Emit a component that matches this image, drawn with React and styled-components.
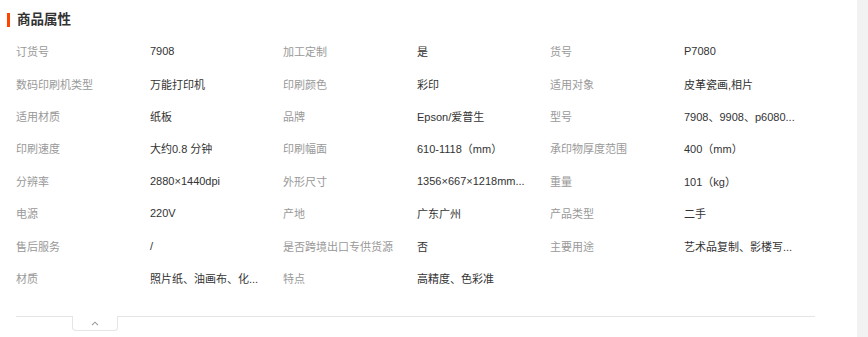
import React from 'react';
import styled, { createGlobalStyle } from 'styled-components';

const GlobalStyle = createGlobalStyle`
  body {
    margin: 0;
    background: #f2f2f2;
    font-family: "Liberation Sans", "Noto Sans CJK SC", sans-serif;
  }
`;

const Panel = styled.div`
  width: 857px;
  min-height: 337px;
  background: #fff;
  padding-top: 13px;
  box-sizing: border-box;
`;

const Title = styled.div`
  display: flex;
  align-items: center;
  height: 14px;
  padding-left: 7px;
`;

const Bar = styled.span`
  width: 3px;
  height: 14px;
  background: #ff4400;
`;

const TitleText = styled.h2`
  margin: 0 0 0 7px;
  font-size: 13.5px;
  line-height: 14px;
  font-weight: bold;
  color: #333;
`;

const Grid = styled.div`
  display: grid;
  grid-template-columns: repeat(3, 134px 133px);
  grid-auto-rows: 32.4px;
  align-items: center;
  width: 801px;
  margin: 8px 0 0 16px;
  font-size: 11px;
`;

const Label = styled.div`
  color: #999;
  white-space: nowrap;
`;

const Value = styled.div`
  color: #333;
  white-space: nowrap;
`;

const Footer = styled.div`
  width: 799px;
  margin: 22px 0 0 16px;
  border-top: 1px solid #e5e5e5;
`;

const Toggle = styled.button`
  display: flex;
  align-items: center;
  justify-content: center;
  width: 46px;
  height: 15px;
  margin: -1px 0 0 56px;
  padding: 0;
  background: #fff;
  border: 1px solid #e5e5e5;
  border-top: none;
  border-radius: 0 0 4px 4px;
  cursor: pointer;
`;

const rows = [
  ['订货号', '7908', '加工定制', '是', '货号', 'P7080'],
  ['数码印刷机类型', '万能打印机', '印刷颜色', '彩印', '适用对象', '皮革瓷画,相片'],
  ['适用材质', '纸板', '品牌', 'Epson/爱普生', '型号', '7908、9908、p6080...'],
  ['印刷速度', '大约0.8 分钟', '印刷幅面', '610-1118（mm）', '承印物厚度范围', '400（mm）'],
  ['分辨率', '2880×1440dpi', '外形尺寸', '1356×667×1218mm...', '重量', '101（kg）'],
  ['电源', '220V', '产地', '广东广州', '产品类型', '二手'],
  ['售后服务', '/', '是否跨境出口专供货源', '否', '主要用途', '艺术品复制、影楼写...'],
  ['材质', '照片纸、油画布、化...', '特点', '高精度、色彩准', '', ''],
];

const App = () => (
  <>
    <GlobalStyle />
    <Panel>
      <Title>
        <Bar />
        <TitleText>商品属性</TitleText>
      </Title>
      <Grid>
        {rows.map((row, i) =>
          row.map((text, j) =>
            j % 2 === 0 ? (
              <Label key={`${i}-${j}`}>{text}</Label>
            ) : (
              <Value key={`${i}-${j}`}>{text}</Value>
            )
          )
        )}
      </Grid>
      <Footer>
        <Toggle>
          <svg width="8" height="5" viewBox="0 0 8 5">
            <path d="M1 4.2 L4 1.2 L7 4.2" fill="none" stroke="#999" strokeWidth="1.1" />
          </svg>
        </Toggle>
      </Footer>
    </Panel>
  </>
);

export default App;
